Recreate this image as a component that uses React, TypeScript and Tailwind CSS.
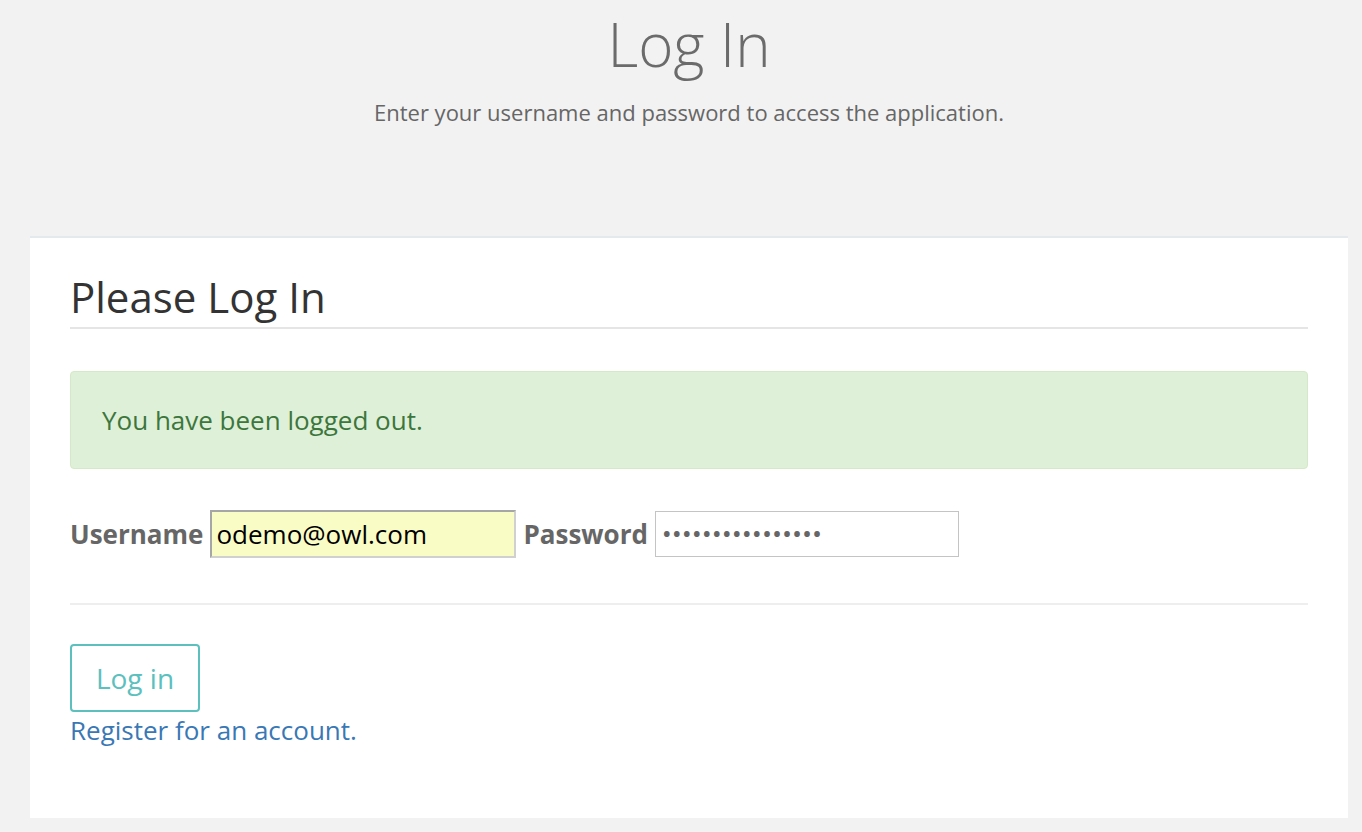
export default function App() {
  return (
    <div className="min-h-[832px] bg-[#f2f2f2] pb-[14px] font-['Open_Sans',sans-serif]">
      {/* Page header */}
      <div className="ml-[30px] mr-[14px] pt-[14px] text-center">
        <h1 className="text-[60px] font-light leading-none text-[#6b6b6b]">Log In</h1>
        <p className="mt-[23px] text-[22px] leading-[30px] text-[#666]">
          Enter your username and password to access the application.
        </p>
      </div>

      {/* Login card */}
      <div className="ml-[30px] mr-[14px] mt-[109px] border-t-2 border-[#e4e9ed] bg-white px-10 pt-[36px] pb-[70px]">
        <h2 className="border-b-2 border-[#e5e5e5] pb-2 text-[42px] leading-[45px] text-[#333]">
          Please Log In
        </h2>

        <div className="mt-[42px] flex h-[98px] items-center rounded border border-[#d6e9c6] bg-[#dff0d8] pl-[31px] text-[26px] text-[#3c763d]">
          You have been logged out.
        </div>

        <div className="mt-[41px] flex items-center">
          <label className="text-[26px] font-bold text-[#666]">Username</label>
          <div className="ml-[7px] flex h-[48px] w-[306px] items-center border-2 border-[#a6a6a6] border-b-[#d0d0d0] border-r-[#d0d0d0] bg-[#fafcc6] pl-1 text-[26px] text-black">
            odemo@owl.com
          </div>
          <label className="ml-[7px] text-[26px] font-bold text-[#666]">Password</label>
          <div className="ml-[7px] flex h-[46px] w-[304px] items-center border border-[#c4c4c4] bg-white pl-[7px] text-[20px] font-bold tracking-[2.5px] text-[#666]">
            ••••••••••••••••
          </div>
        </div>

        <div className="mt-[45px] border-t-2 border-[#eeeeee]" />

        <button className="mt-[39px] h-[68px] w-[130px] rounded border-2 border-[#5bc0be] bg-white text-[28px] text-[#5bc0be]">
          Log in
        </button>
        <div>
          <a href="#" className="block text-[26px] leading-[36px] text-[#3a78b5]">
            Register for an account.
          </a>
        </div>
      </div>
    </div>
  )
}
